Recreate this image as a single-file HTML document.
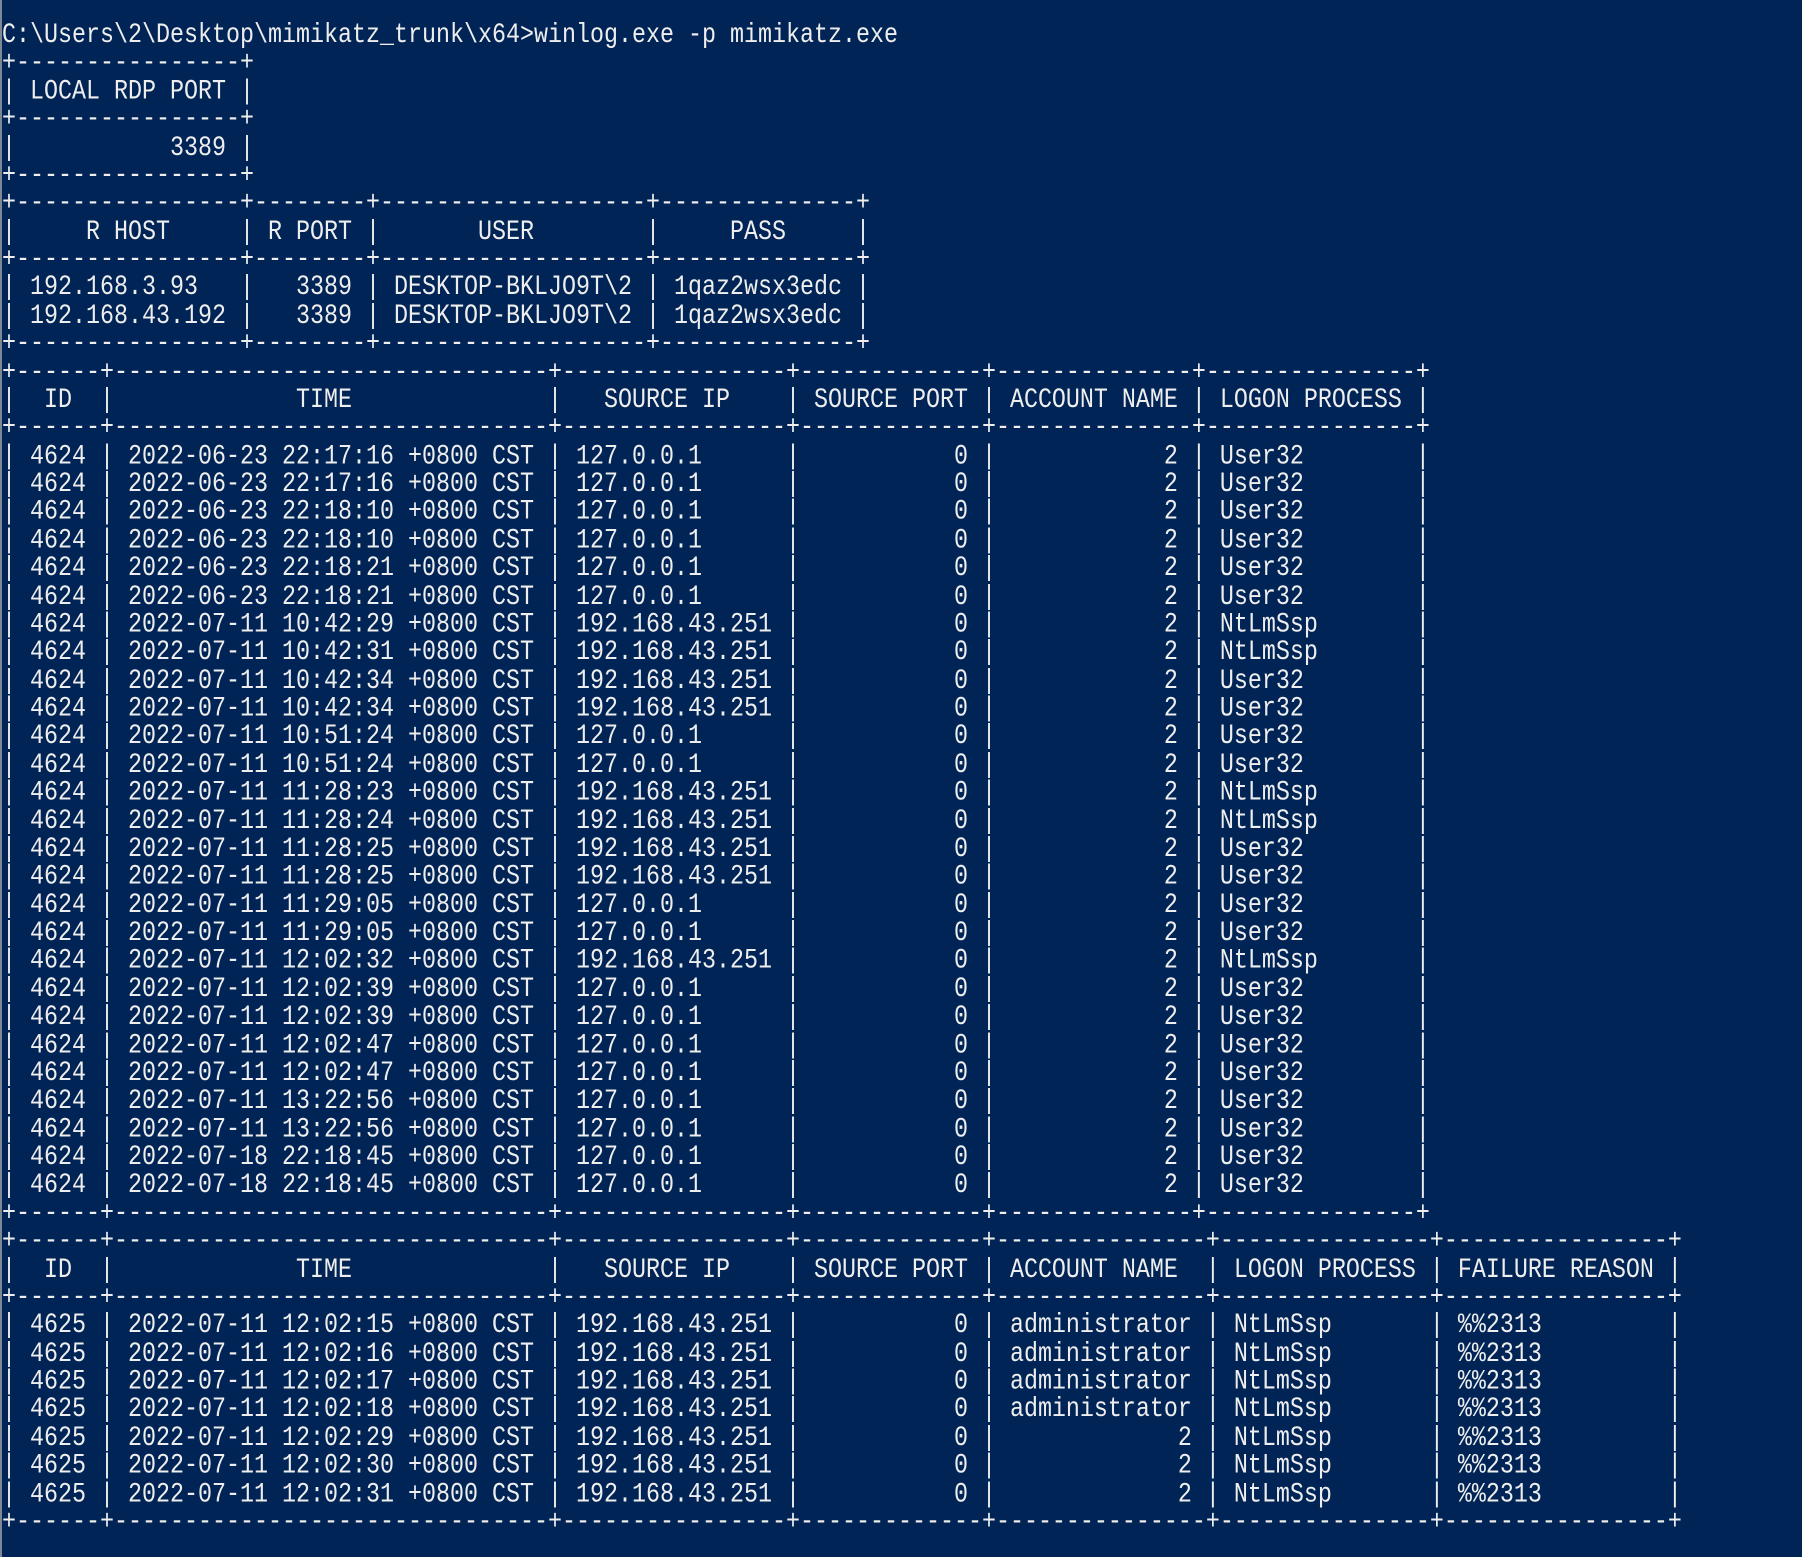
<!DOCTYPE html>
<html><head><meta charset="utf-8"><style>
html,body{margin:0;padding:0;background:#012456;}
body{width:1802px;height:1557px;overflow:hidden;position:relative;}
.edge{position:absolute;left:0;top:0;width:2px;height:1557px;background:#7d8795;}
pre{position:absolute;left:2px;top:22.5px;margin:0;font-family:"Liberation Mono",monospace;font-size:23.33px;line-height:23.375px;color:#eeeeee;transform:scaleY(1.2);transform-origin:0 0;white-space:pre;}
</style></head><body><div class="edge"></div><pre>C:\Users\2\Desktop\mimikatz_trunk\x64&gt;winlog.exe -p mimikatz.exe
+----------------+
| LOCAL RDP PORT |
+----------------+
|           3389 |
+----------------+
+----------------+--------+-------------------+--------------+
|     R HOST     | R PORT |       USER        |     PASS     |
+----------------+--------+-------------------+--------------+
| 192.168.3.93   |   3389 | DESKTOP-BKLJO9T\2 | 1qaz2wsx3edc |
| 192.168.43.192 |   3389 | DESKTOP-BKLJO9T\2 | 1qaz2wsx3edc |
+----------------+--------+-------------------+--------------+
+------+-------------------------------+----------------+-------------+--------------+---------------+
|  ID  |             TIME              |   SOURCE IP    | SOURCE PORT | ACCOUNT NAME | LOGON PROCESS |
+------+-------------------------------+----------------+-------------+--------------+---------------+
| 4624 | 2022-06-23 22:17:16 +0800 CST | 127.0.0.1      |           0 |            2 | User32        |
| 4624 | 2022-06-23 22:17:16 +0800 CST | 127.0.0.1      |           0 |            2 | User32        |
| 4624 | 2022-06-23 22:18:10 +0800 CST | 127.0.0.1      |           0 |            2 | User32        |
| 4624 | 2022-06-23 22:18:10 +0800 CST | 127.0.0.1      |           0 |            2 | User32        |
| 4624 | 2022-06-23 22:18:21 +0800 CST | 127.0.0.1      |           0 |            2 | User32        |
| 4624 | 2022-06-23 22:18:21 +0800 CST | 127.0.0.1      |           0 |            2 | User32        |
| 4624 | 2022-07-11 10:42:29 +0800 CST | 192.168.43.251 |           0 |            2 | NtLmSsp       |
| 4624 | 2022-07-11 10:42:31 +0800 CST | 192.168.43.251 |           0 |            2 | NtLmSsp       |
| 4624 | 2022-07-11 10:42:34 +0800 CST | 192.168.43.251 |           0 |            2 | User32        |
| 4624 | 2022-07-11 10:42:34 +0800 CST | 192.168.43.251 |           0 |            2 | User32        |
| 4624 | 2022-07-11 10:51:24 +0800 CST | 127.0.0.1      |           0 |            2 | User32        |
| 4624 | 2022-07-11 10:51:24 +0800 CST | 127.0.0.1      |           0 |            2 | User32        |
| 4624 | 2022-07-11 11:28:23 +0800 CST | 192.168.43.251 |           0 |            2 | NtLmSsp       |
| 4624 | 2022-07-11 11:28:24 +0800 CST | 192.168.43.251 |           0 |            2 | NtLmSsp       |
| 4624 | 2022-07-11 11:28:25 +0800 CST | 192.168.43.251 |           0 |            2 | User32        |
| 4624 | 2022-07-11 11:28:25 +0800 CST | 192.168.43.251 |           0 |            2 | User32        |
| 4624 | 2022-07-11 11:29:05 +0800 CST | 127.0.0.1      |           0 |            2 | User32        |
| 4624 | 2022-07-11 11:29:05 +0800 CST | 127.0.0.1      |           0 |            2 | User32        |
| 4624 | 2022-07-11 12:02:32 +0800 CST | 192.168.43.251 |           0 |            2 | NtLmSsp       |
| 4624 | 2022-07-11 12:02:39 +0800 CST | 127.0.0.1      |           0 |            2 | User32        |
| 4624 | 2022-07-11 12:02:39 +0800 CST | 127.0.0.1      |           0 |            2 | User32        |
| 4624 | 2022-07-11 12:02:47 +0800 CST | 127.0.0.1      |           0 |            2 | User32        |
| 4624 | 2022-07-11 12:02:47 +0800 CST | 127.0.0.1      |           0 |            2 | User32        |
| 4624 | 2022-07-11 13:22:56 +0800 CST | 127.0.0.1      |           0 |            2 | User32        |
| 4624 | 2022-07-11 13:22:56 +0800 CST | 127.0.0.1      |           0 |            2 | User32        |
| 4624 | 2022-07-18 22:18:45 +0800 CST | 127.0.0.1      |           0 |            2 | User32        |
| 4624 | 2022-07-18 22:18:45 +0800 CST | 127.0.0.1      |           0 |            2 | User32        |
+------+-------------------------------+----------------+-------------+--------------+---------------+
+------+-------------------------------+----------------+-------------+---------------+---------------+----------------+
|  ID  |             TIME              |   SOURCE IP    | SOURCE PORT | ACCOUNT NAME  | LOGON PROCESS | FAILURE REASON |
+------+-------------------------------+----------------+-------------+---------------+---------------+----------------+
| 4625 | 2022-07-11 12:02:15 +0800 CST | 192.168.43.251 |           0 | administrator | NtLmSsp       | %%2313         |
| 4625 | 2022-07-11 12:02:16 +0800 CST | 192.168.43.251 |           0 | administrator | NtLmSsp       | %%2313         |
| 4625 | 2022-07-11 12:02:17 +0800 CST | 192.168.43.251 |           0 | administrator | NtLmSsp       | %%2313         |
| 4625 | 2022-07-11 12:02:18 +0800 CST | 192.168.43.251 |           0 | administrator | NtLmSsp       | %%2313         |
| 4625 | 2022-07-11 12:02:29 +0800 CST | 192.168.43.251 |           0 |             2 | NtLmSsp       | %%2313         |
| 4625 | 2022-07-11 12:02:30 +0800 CST | 192.168.43.251 |           0 |             2 | NtLmSsp       | %%2313         |
| 4625 | 2022-07-11 12:02:31 +0800 CST | 192.168.43.251 |           0 |             2 | NtLmSsp       | %%2313         |
+------+-------------------------------+----------------+-------------+---------------+---------------+----------------+</pre></body></html>
